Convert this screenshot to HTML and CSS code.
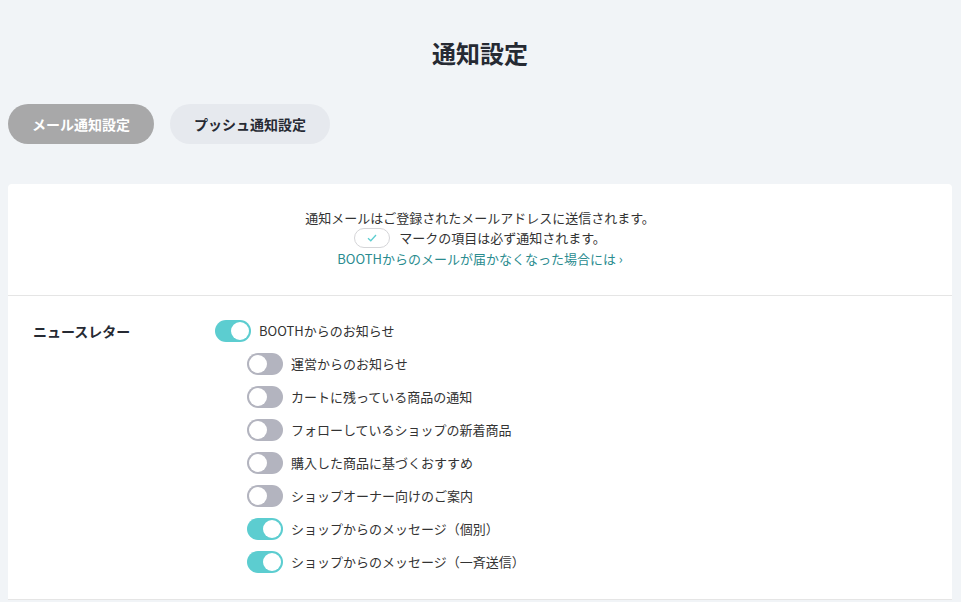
FILE: index.html
```html
<!DOCTYPE html>
<html lang="ja">
<head>
<meta charset="utf-8">
<link rel="stylesheet" href="styles.css">
</head>
<body>
<div class="page">
  <h1 class="title">通知設定</h1>
  <div class="tabs">
    <button class="tab tab-active">メール通知設定</button>
    <button class="tab">プッシュ通知設定</button>
  </div>
  <div class="card">
    <div class="info">
      <p>通知メールはご登録されたメールアドレスに送信されます。</p>
      <p><span class="check-pill"><svg width="10" height="8" viewBox="0 0 10 8"><path d="M1 4.2 L3.8 6.8 L9 1" fill="none" stroke="#5ccdd0" stroke-width="1.3"/></svg></span>マークの項目は必ず通知されます。</p>
      <p><a class="link" href="#">BOOTHからのメールが届かなくなった場合には ›</a></p>
    </div>
    <div class="section">
      <div class="label">ニュースレター</div>
      <div class="options">
        <div class="row"><span class="toggle on"></span><span>BOOTHからのお知らせ</span></div>
        <div class="row sub"><span class="toggle"></span><span>運営からのお知らせ</span></div>
        <div class="row sub"><span class="toggle"></span><span>カートに残っている商品の通知</span></div>
        <div class="row sub"><span class="toggle"></span><span>フォローしているショップの新着商品</span></div>
        <div class="row sub"><span class="toggle"></span><span>購入した商品に基づくおすすめ</span></div>
        <div class="row sub"><span class="toggle"></span><span>ショップオーナー向けのご案内</span></div>
        <div class="row sub"><span class="toggle on"></span><span>ショップからのメッセージ（個別）</span></div>
        <div class="row sub"><span class="toggle on"></span><span>ショップからのメッセージ（一斉送信）</span></div>
      </div>
    </div>
  </div>
</div>
</body>
</html>
```

FILE: styles.css
```css
html, body {
  margin: 0;
  padding: 0;
}
body {
  background: #f1f4f7;
  font-family: "Noto Sans CJK JP", "Noto Sans", sans-serif;
  color: #333;
}
.page {
  padding: 0 9px 0 8px;
}
.title {
  margin: 0;
  padding-top: 36px;
  height: 68px;
  font-size: 24px;
  line-height: 34px;
  font-weight: 700;
  text-align: center;
  color: #262a33;
  box-sizing: content-box;
}
.tabs {
  display: flex;
  gap: 16px;
}
.tab {
  height: 40px;
  padding: 0 24px;
  border: none;
  border-radius: 20px;
  font-family: inherit;
  font-size: 14px;
  font-weight: 700;
  background: #e6e9ee;
  color: #262a33;
}
.tab-active {
  background: #a8a8a9;
  color: #fff;
}
.card {
  margin-top: 40px;
  background: #fff;
  border-radius: 4px 4px 0 0;
}
.info {
  padding: 24px 0 26px;
  border-bottom: 1px solid #e5e5e5;
  text-align: center;
  font-size: 13px;
  line-height: 20px;
}
.info p {
  margin: 0;
}
.check-pill {
  display: inline-flex;
  align-items: center;
  justify-content: center;
  width: 34px;
  height: 18px;
  border: 1px solid #d5d5d8;
  border-radius: 10px;
  vertical-align: middle;
  margin-right: 9px;
  position: relative;
  top: -1px;
}
.link {
  color: #2b8c8f;
  text-decoration: none;
}
.section {
  display: flex;
  padding: 24px 25px 26px;
  border-bottom: 1px solid #e5e5e5;
}
.label {
  width: 182px;
  font-size: 14px;
  font-weight: 700;
  line-height: 22px;
  color: #262a33;
}
.options {
  display: flex;
  flex-direction: column;
  gap: 11px;
}
.row {
  display: flex;
  align-items: center;
  gap: 8px;
  font-size: 13px;
  line-height: 22px;
  color: #333;
}
.row.sub {
  padding-left: 32px;
}
.toggle {
  position: relative;
  width: 36px;
  height: 22px;
  border-radius: 11px;
  background: #b3b4bf;
  flex: none;
}
.toggle::after {
  content: "";
  position: absolute;
  top: 2px;
  left: 2px;
  width: 18px;
  height: 18px;
  border-radius: 50%;
  background: #fff;
}
.toggle.on {
  background: #5ccdd0;
}
.toggle.on::after {
  left: 16px;
}
```
